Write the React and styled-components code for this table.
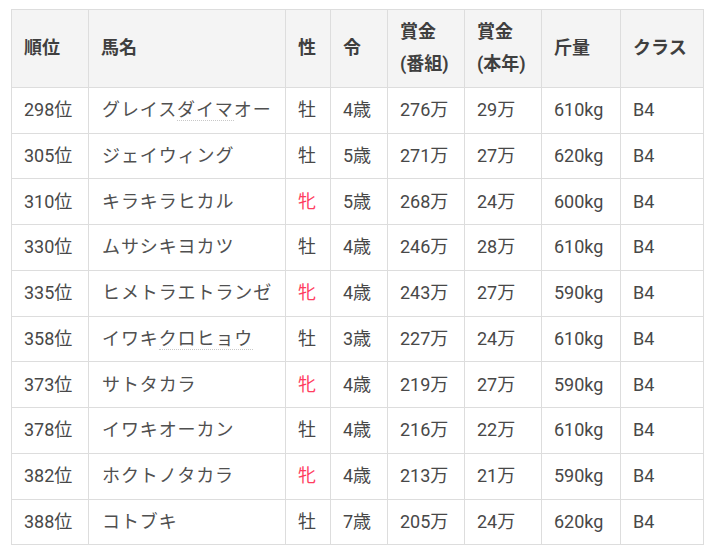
import React from "react";
import styled, { createGlobalStyle } from "styled-components";

const Global = createGlobalStyle`
  html, body { margin: 0; padding: 0; background: #fff; }
  body { font-family: Roboto, "Noto Sans CJK JP", sans-serif; color: #444; }
`;

const Wrap = styled.div`
  padding: 9px 0 0 11px;
`;

const Table = styled.table`
  border-collapse: collapse;
  table-layout: fixed;
  width: 692px;
  font-size: 18px;
  line-height: 1.8;
`;

const Th = styled.th`
  background: #f4f4f4;
  border: 1px solid #dddddd;
  padding: 6px 12px;
  text-align: left;
  vertical-align: middle;
  font-weight: 700;
  color: #3f3f3f;
`;

const Td = styled.td`
  border: 1px solid #dddddd;
  padding: 6.2px 12px;
  text-align: left;
  vertical-align: middle;
  font-weight: 400;
  color: ${(p) => (p.$female ? "#ff3d5f" : "#484848")};
  white-space: nowrap;
`;

const Name = styled.span`
  letter-spacing: 0.9px;
  padding-left: 1px;
  color: #505050;
`;

const Dotted = styled.span`
  border-bottom: 1px dotted #c8c8c8;
`;

const cols = [77, 197, 45, 57, 77, 77, 79, 83];

const rows = [
  ["298位", ["グレイス", "ダイマ", "オー"], "牡", "4歳", "276万", "29万", "610kg", "B4"],
  ["305位", ["ジェイウィング"], "牡", "5歳", "271万", "27万", "620kg", "B4"],
  ["310位", ["キラキラヒカル"], "牝", "5歳", "268万", "24万", "600kg", "B4"],
  ["330位", ["ムサシキヨカツ"], "牡", "4歳", "246万", "28万", "610kg", "B4"],
  ["335位", ["ヒメトラエトランゼ"], "牝", "4歳", "243万", "27万", "590kg", "B4"],
  ["358位", ["イワキ", "クロヒョウ", ""], "牡", "3歳", "227万", "24万", "610kg", "B4"],
  ["373位", ["サトタカラ"], "牝", "4歳", "219万", "27万", "590kg", "B4"],
  ["378位", ["イワキオーカン"], "牡", "4歳", "216万", "22万", "610kg", "B4"],
  ["382位", ["ホクトノタカラ"], "牝", "4歳", "213万", "21万", "590kg", "B4"],
  ["388位", ["コトブキ"], "牡", "7歳", "205万", "24万", "620kg", "B4"],
];

function HorseName({ parts }) {
  if (parts.length === 1) return <Name>{parts[0]}</Name>;
  return (
    <Name>
      {parts[0]}
      <Dotted>{parts[1]}</Dotted>
      {parts[2]}
    </Name>
  );
}

export default function App() {
  return (
    <>
      <Global />
      <Wrap>
        <Table>
          <colgroup>
            {cols.map((w, i) => (
              <col key={i} style={{ width: w }} />
            ))}
          </colgroup>
          <thead>
            <tr>
              <Th>順位</Th>
              <Th>馬名</Th>
              <Th>性</Th>
              <Th>令</Th>
              <Th>
                賞金
                <br />
                (番組)
              </Th>
              <Th>
                賞金
                <br />
                (本年)
              </Th>
              <Th>斤量</Th>
              <Th>クラス</Th>
            </tr>
          </thead>
          <tbody>
            {rows.map((r) => (
              <tr key={r[0]}>
                <Td>{r[0]}</Td>
                <Td>
                  <HorseName parts={r[1]} />
                </Td>
                <Td $female={r[2] === "牝"}>{r[2]}</Td>
                <Td>{r[3]}</Td>
                <Td>{r[4]}</Td>
                <Td>{r[5]}</Td>
                <Td>{r[6]}</Td>
                <Td>{r[7]}</Td>
              </tr>
            ))}
          </tbody>
        </Table>
      </Wrap>
    </>
  );
}
